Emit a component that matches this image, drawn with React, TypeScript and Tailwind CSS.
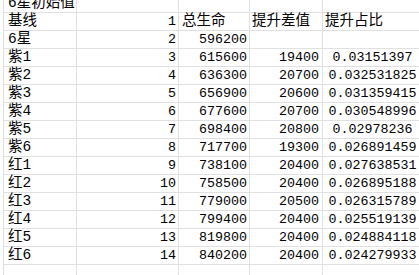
import React from "react";

type Row = [string, string, string, string, string];

const rows: Row[] = [
  ["6星初始值", "", "", "", ""],
  ["基线", "1", "总生命", "提升差值", "提升占比"],
  ["6星", "2", "596200", "", ""],
  ["紫1", "3", "615600", "19400", "0.03151397"],
  ["紫2", "4", "636300", "20700", "0.032531825"],
  ["紫3", "5", "656900", "20600", "0.031359415"],
  ["紫4", "6", "677600", "20700", "0.030548996"],
  ["紫5", "7", "698400", "20800", "0.02978236"],
  ["紫6", "8", "717700", "19300", "0.026891459"],
  ["红1", "9", "738100", "20400", "0.027638531"],
  ["红2", "10", "758500", "20400", "0.026895188"],
  ["红3", "11", "779000", "20500", "0.026315789"],
  ["红4", "12", "799400", "20400", "0.025519139"],
  ["红5", "13", "819800", "20400", "0.024884118"],
  ["红6", "14", "840200", "20400", "0.024279933"],
  ["", "", "", "", ""],
];

const cell = "h-[18px] border-r border-b border-[#e0e0e0] whitespace-nowrap leading-[17px]";
const cjk = "text-[14.5px] [font-family:'Liberation_Mono','Noto_Sans_CJK_SC',monospace]";
const num = "text-[13.33px] [font-family:'Liberation_Mono','Noto_Sans_CJK_SC',monospace]";

function isNum(s: string) {
  return /^[0-9.]+$/.test(s);
}

export default function App() {
  return (
    <div className="w-[419px] h-[275px] overflow-hidden bg-white text-black">
      <div className="-mt-[5px] ml-[3px] border-l border-[#e0e0e0] grid grid-cols-[73px_102px_71px_73px_100px]">
        {rows.map((r, i) => (
          <React.Fragment key={i}>
            <div className={`${cell} ${cjk} pl-[4px] overflow-visible`}>{r[0]}</div>
            <div className={`${cell} ${num} pr-[2px] text-right`}>{r[1]}</div>
            <div
              className={`${cell} ${isNum(r[2]) ? `${num} text-right pr-[2px]` : `${cjk} pl-[3px]`}`}
            >
              {r[2]}
            </div>
            <div
              className={`${cell} ${isNum(r[3]) ? `${num} text-right pr-[3px]` : `${cjk} pl-[2px]`}`}
            >
              {r[3]}
            </div>
            <div
              className={`${cell} ${isNum(r[4]) ? `${num} text-center` : `${cjk} pl-[2px]`}`}
            >
              {r[4]}
            </div>
          </React.Fragment>
        ))}
      </div>
    </div>
  );
}
